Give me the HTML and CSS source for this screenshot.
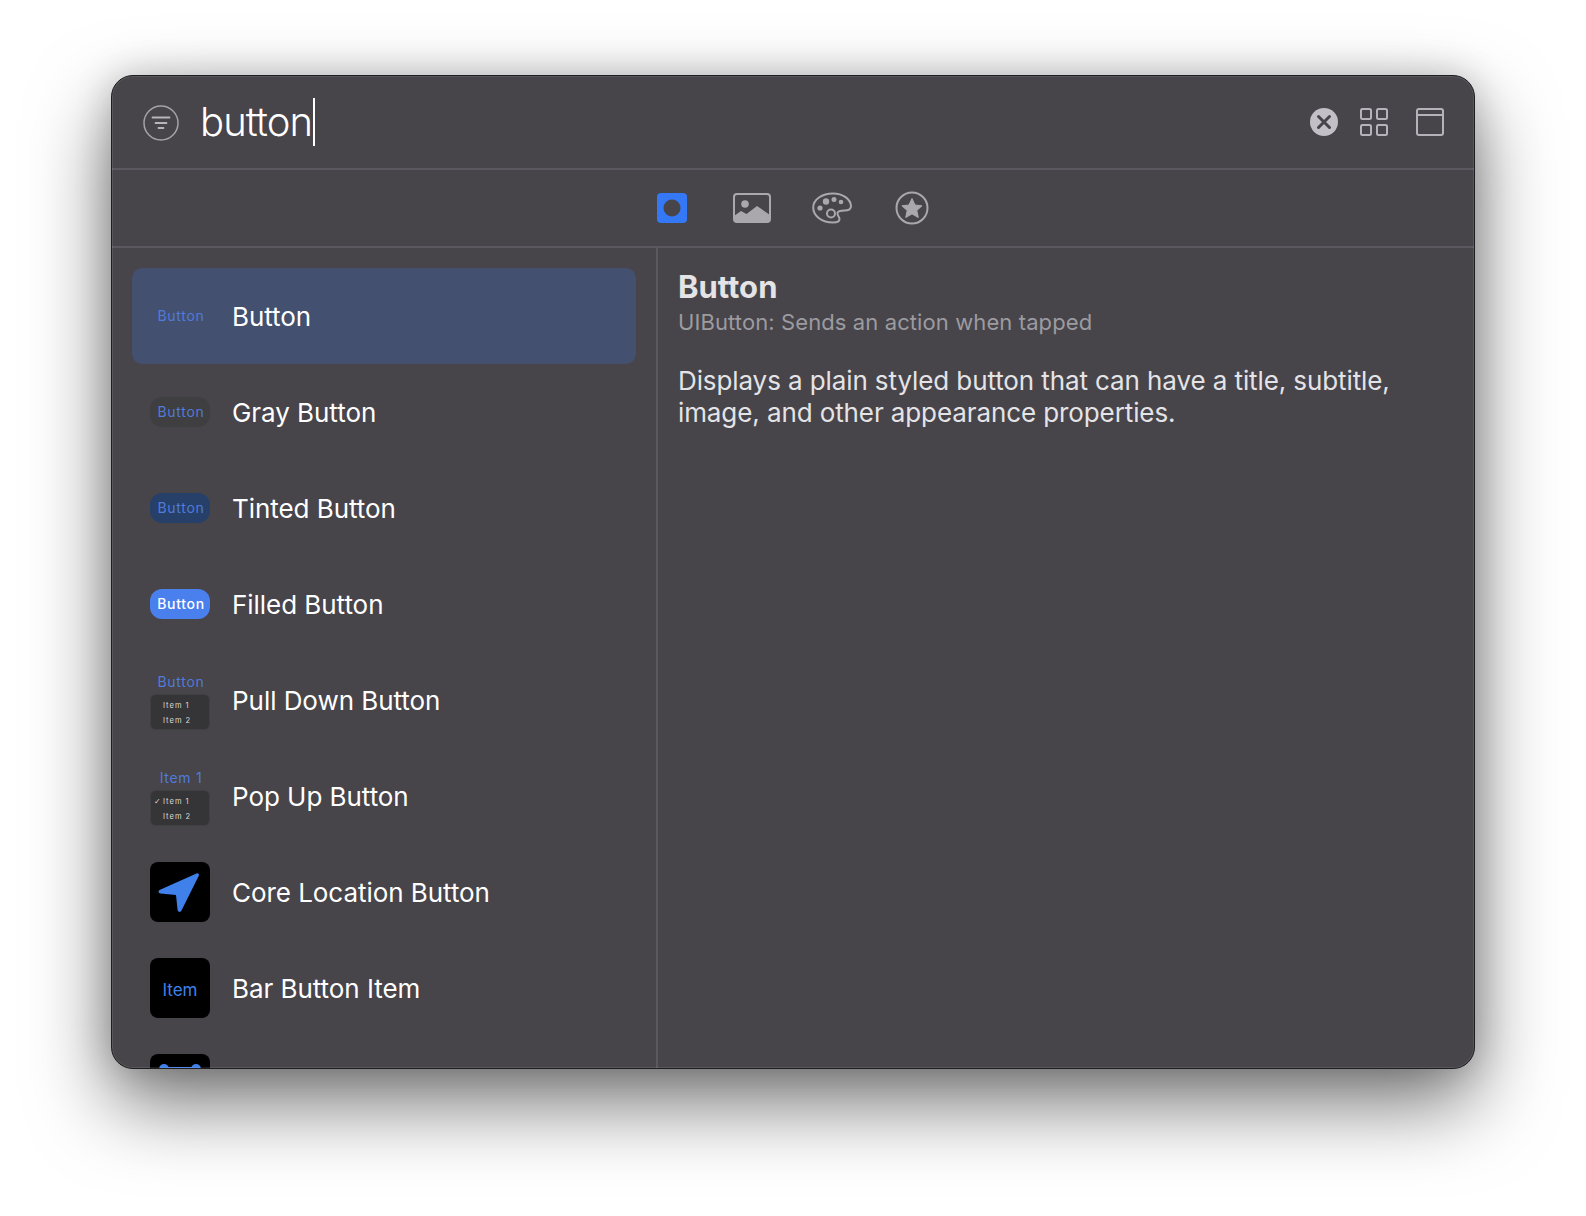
FILE: index.html
```html
<!DOCTYPE html>
<html lang="en">
<head>
<meta charset="utf-8">
<title>Library</title>
<link rel="stylesheet" href="styles.css">
</head>
<body>
<div class="window">
  <header class="search">
    <svg class="filter" width="36" height="36" viewBox="0 0 36 36"><circle cx="18" cy="18" r="17" fill="none" stroke="#a5a3a8" stroke-width="1.500"/><path d="M9.500 12.500h17M12.500 18h11M15.500 23h5" stroke="#b8b6bb" stroke-width="1.800" stroke-linecap="round" fill="none"/></svg>
    <div class="query"><span class="query-text">button</span><span class="caret"></span></div>
    <div class="actions">
      <svg width="28" height="28" viewBox="0 0 28 28"><circle cx="14" cy="14" r="14" fill="#c2c0c6"/><path d="M8.500 8.500l11 11M19.500 8.500l-11 11" stroke="#47454b" stroke-width="3" stroke-linecap="round"/></svg>
      <svg width="28" height="28" viewBox="0 0 28 28" fill="none" stroke="#b5b3b9" stroke-width="2"><rect x="1" y="1" width="10" height="10" rx="1.500"/><rect x="17" y="1" width="10" height="10" rx="1.500"/><rect x="1" y="17" width="10" height="10" rx="1.500"/><rect x="17" y="17" width="10" height="10" rx="1.500"/></svg>
      <svg width="28" height="28" viewBox="0 0 28 28" fill="none" stroke="#b5b3b9" stroke-width="2"><rect x="1" y="1" width="26" height="26" rx="2"/><path d="M1 7h26"/></svg>
    </div>
  </header>
  <nav class="tabs">
    <svg class="tab-object" width="30" height="30" viewBox="0 0 30 30"><rect width="30" height="30" rx="4" fill="#3478f6"/><circle cx="15" cy="15" r="8.500" fill="#47444a"/></svg>
    <svg width="38" height="30" viewBox="0 0 38 30"><rect x="1" y="1" width="36" height="28" rx="3" fill="none" stroke="#aaa8ad" stroke-width="2"/><circle cx="12" cy="11" r="3.800" fill="#aaa8ad"/><path d="M1 26v-3l7-5 5.500 3 10.500-8 13 9v4a3 3 0 0 1-3 3H4a3 3 0 0 1-3-3z" fill="#aaa8ad"/></svg>
    <svg class="tab-palette" width="40" height="32" viewBox="0 0 40 32"><path d="M21 1.500C10 1.500 1.200 7.500 1.200 15.500 1.200 24 10 30.500 21 30.500c4.500 0 6.500-1.500 6.500-3.500 0-2.500-2.500-3.500-2-6 .6-2.500 3.500-2.500 7-2.500 4 0 6.500-1.500 6.500-4.500C38.500 7 31 1.500 21 1.500z" fill="none" stroke="#aaa8ad" stroke-width="2"/><circle cx="8" cy="16" r="2.600" fill="#aaa8ad"/><circle cx="14" cy="9.500" r="3.200" fill="#aaa8ad"/><circle cx="22" cy="7.500" r="2.500" fill="#aaa8ad"/><circle cx="29" cy="10" r="2.300" fill="#aaa8ad"/><circle cx="19" cy="21.500" r="4" fill="none" stroke="#aaa8ad" stroke-width="2"/></svg>
    <svg width="34" height="34" viewBox="0 0 34 34"><circle cx="17" cy="17" r="15.500" fill="none" stroke="#aaa8ad" stroke-width="2"/><path d="M17 7.500l3 6.500 7 .8-5.200 4.700 1.500 7-6.300-3.600-6.300 3.600 1.500-7L6.900 14.800l7-.8z" fill="#aaa8ad" stroke="#aaa8ad" stroke-linejoin="round"/></svg>
  </nav>
  <div class="content">
    <ul class="list">
      <li class="row selected"><div class="thumb"><span class="chip">Button</span></div><span class="label">Button</span></li>
      <li class="row"><div class="thumb"><span class="chip gray">Button</span></div><span class="label">Gray Button</span></li>
      <li class="row"><div class="thumb"><span class="chip tinted">Button</span></div><span class="label">Tinted Button</span></li>
      <li class="row"><div class="thumb"><span class="chip filled">Button</span></div><span class="label">Filled Button</span></li>
      <li class="row"><div class="thumb stack"><span class="chip short">Button</span><div class="menu"><span>Item 1</span><span>Item 2</span></div></div><span class="label">Pull Down Button</span></li>
      <li class="row"><div class="thumb stack"><span class="chip short">Item 1</span><div class="menu"><span class="checked">Item 1</span><span>Item 2</span></div></div><span class="label">Pop Up Button</span></li>
      <li class="row"><div class="thumb tile"><svg width="60" height="60" viewBox="0 0 60 60"><path d="M9.500 28L46.500 11.500c1.500-.7 3 .8 2.300 2.300L31.500 48.500c-.9 2-3.500 1.800-3.900-.4L26 33 10.500 31.500c-2-.2-2.600-2.600-1-3.500z" fill="#3f80ea"/></svg></div><span class="label">Core Location Button</span></li>
      <li class="row"><div class="thumb tile"><span class="item">Item</span></div><span class="label">Bar Button Item</span></li>
      <li class="row"><div class="thumb tile"><svg width="60" height="60" viewBox="0 0 60 60" fill="#3f80ea"><circle cx="14" cy="15" r="5"/><circle cx="46" cy="15" r="5"/><rect x="14" y="13" width="32" height="20"/></svg></div></li>
    </ul>
    <section class="detail">
      <h1>Button</h1>
      <p class="sub">UIButton: Sends an action when tapped</p>
      <p class="desc">Displays a plain styled button that can have a title, subtitle, image, and other appearance properties.</p>
    </section>
  </div>
</div>
</body>
</html>
```
FILE: styles.css
```css
* { box-sizing: border-box; }
html, body { margin: 0; height: 100%; background: #fff; }
body { padding: 75px 0 0 111px; font-family: Inter, "Liberation Sans", sans-serif; overflow: hidden; }
.window {
  position: relative; width: 1364px; height: 994px; background: #47444a; border-radius: 22px;
  border: 1px solid #1e1d20; box-shadow: 0 34px 80px rgba(0,0,0,.55), 0 0 36px rgba(0,0,0,.18);
  overflow: hidden; display: flex; flex-direction: column;
}
.window::after { content: ""; position: absolute; inset: 0; border-radius: 21px; box-shadow: inset 0 0 0 1px rgba(255,255,255,.1); pointer-events: none; }
.search { height: 94px; flex: none; border-bottom: 2px solid #5b595f; display: flex; align-items: center; padding: 0 30px 0 31px; }
.filter { flex: none; margin-top: 1px; }
.query { margin-left: 21px; font-size: 40px; font-weight: 300; color: #fff; display: flex; align-items: center; letter-spacing: -.9px; }
.query-text { padding-bottom: 2px; }
.caret { width: 2px; height: 48px; background: #fff; margin-left: 1px; }
.actions { margin-left: auto; display: flex; gap: 22px; align-items: center; }
.actions svg:last-child { margin-left: 6px; }
.tabs { height: 78px; flex: none; border-bottom: 2px solid #5b595f; display: flex; align-items: center; justify-content: center; gap: 41px; padding-right: 1px; }
.tabs svg { flex: none; }
.tab-object { margin-right: 5px; }
.tab-palette { margin-right: 2px; }
.content { flex: 1; display: flex; min-height: 0; }
.list { list-style: none; margin: 0; padding: 20px 20px 0 20px; width: 546px; flex: none; border-right: 2px solid #5b595f; overflow: hidden; }
.row { height: 96px; display: flex; align-items: center; padding-left: 18px; gap: 22px; border-radius: 10px; flex: none; }
.row.selected { background: #435070; }
.thumb { width: 60px; height: 60px; flex: none; display: flex; align-items: center; justify-content: center; border-radius: 8px; overflow: hidden; }
.chip { width: 60px; height: 30px; flex: none; border-radius: 12px; display: flex; align-items: center; justify-content: center; padding: 0 0 2px 2px; font-size: 14px; color: #4f7bd9; letter-spacing: .7px; }
.chip.gray { background: #3f3e40; }
.chip.tinted { background: #264069; }
.chip.filled { background: #4a80ee; color: #fff; font-weight: 500; }
.chip.short { height: 24px; }
.stack { flex-direction: column; justify-content: flex-start; overflow: visible; }
.menu { width: 60px; height: 36px; flex: none; background: #353436; border: 1px solid #403f42; border-radius: 6px; display: flex; flex-direction: column; justify-content: center; gap: 6px; padding: 2px 0 0 12px; font-size: 7.500px; line-height: 9px; color: #dcdcdc; letter-spacing: 1px; }
.checked { position: relative; }
.checked::before { content: "✓"; position: absolute; left: -9px; top: 0; font-family: "DejaVu Sans", sans-serif; font-size: 8px; }
.tile { background: #000; }
.item { font-size: 17px; color: #3f80ea; padding-top: 3px; }
.label { font-size: 26px; font-weight: 440; color: #fff; white-space: nowrap; letter-spacing: -.05px; }
.detail { flex: 1; padding: 21px 60px 0 20px; color: #e4e3e6; }
.detail h1 { margin: 0; font-size: 31px; line-height: 36px; font-weight: 700; }
.sub { margin: 2px 0 0; font-size: 22px; line-height: 30px; letter-spacing: .1px; color: #9c9ba0; }
.desc { margin: 28px 0 0; font-size: 26px; line-height: 32px; letter-spacing: -.1px; }
```
